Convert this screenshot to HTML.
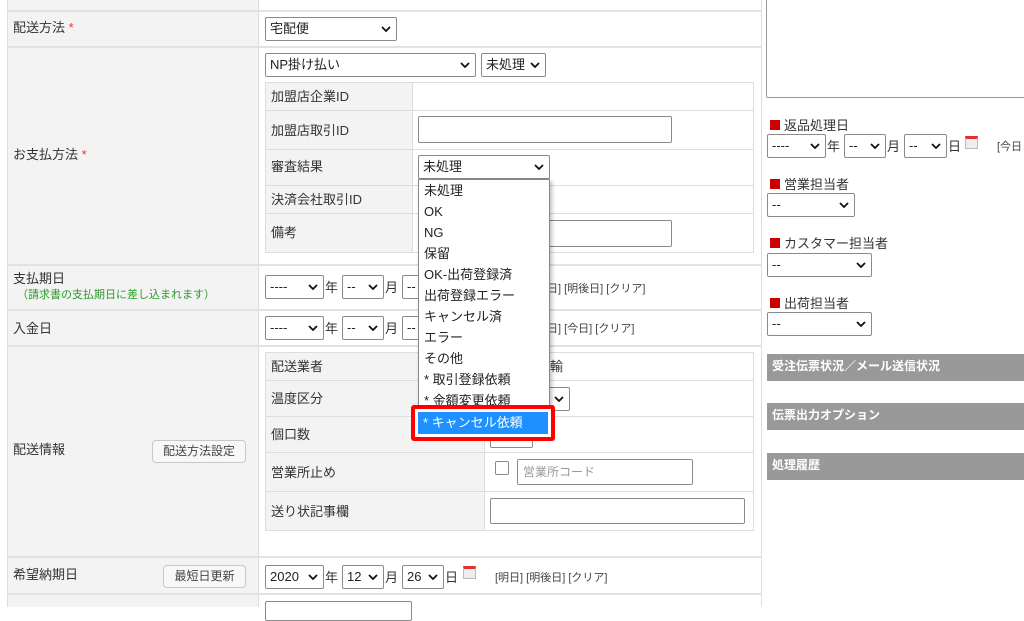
<!DOCTYPE html>
<html><head><meta charset="utf-8"><style>
*{box-sizing:border-box;margin:0;padding:0}
body{width:1024px;height:607px;overflow:hidden;background:#fff;font-family:"Liberation Sans","Noto Sans CJK JP",sans-serif;font-size:13px;color:#333;position:relative}
.a{position:absolute}
.lab{position:absolute;background:#f3f3f3}
.hl{position:absolute;height:2px;background:#e2e2e2}
.vl{position:absolute;width:1px;background:#ddd}
.sel{position:absolute;border:1px solid #8a8a8a;border-radius:2px;background:#fff;height:24px;line-height:22px;padding-left:4px;font-size:13px;color:#222;white-space:nowrap}
.sel svg{position:absolute;right:5px;top:8px}
.inp{position:absolute;border:1px solid #8a8a8a;border-radius:2px;background:#fff}
.t{position:absolute;white-space:nowrap;margin-top:-2px}
.s{position:absolute;font-size:11px;color:#444;white-space:nowrap}
.btn{position:absolute;border:1px solid #c8c8c8;border-radius:4px;background:#f8f8f8;font-size:12px;color:#444;text-align:center;line-height:20px}
.star{color:#e33}
.bar{position:absolute;left:767px;width:257px;height:27px;background:#999;color:#fff;font-weight:bold;font-size:12px;line-height:25px;padding-left:5px}
.sq{display:inline-block;width:10px;height:10px;background:#c00;margin-right:4px}
.cal{position:absolute;width:13px;height:13px;border:1px solid #bbb;border-top:3px solid #d33;background:#eee}
.dd div{height:21px;line-height:21px;padding-left:5px}
</style></head><body>
<svg width="0" height="0" style="position:absolute"><defs><symbol id="ch" viewBox="0 0 10 6"><path d="M1 1L5 5L9 1" stroke="#111" stroke-width="1.8" fill="none"/></symbol></defs></svg>

<div class="lab" style="left:7px;top:0;width:251px;height:607px"></div>
<div class="vl" style="left:7px;top:0;height:607px;background:#ddd"></div>
<div class="vl" style="left:258px;top:0;height:607px;background:#ddd"></div>
<div class="vl" style="left:761px;top:0;height:607px;background:#ddd"></div>
<div class="hl" style="left:7px;top:10px;width:755px"></div>
<div class="hl" style="left:7px;top:46px;width:755px"></div>
<div class="hl" style="left:7px;top:264px;width:755px"></div>
<div class="hl" style="left:7px;top:309px;width:755px"></div>
<div class="hl" style="left:7px;top:345px;width:755px"></div>
<div class="hl" style="left:7px;top:556px;width:755px"></div>
<div class="hl" style="left:7px;top:593px;width:755px"></div>

<div class="t" style="left:13px;top:19px">配送方法 <span class="star">*</span></div>
<div class="sel" style="left:265px;top:17px;width:132px">宅配便<svg width="10" height="6"><use href="#ch"/></svg></div>

<div class="t" style="left:13px;top:146px">お支払方法 <span class="star">*</span></div>
<div class="sel" style="left:265px;top:53px;width:211px">NP掛け払い<svg width="10" height="6"><use href="#ch"/></svg></div>
<div class="sel" style="left:481px;top:53px;width:65px">未処理<svg width="10" height="6"><use href="#ch"/></svg></div>
<div class="a" style="left:265px;top:82px;width:489px;height:171px;border:1px solid #ddd;background:#fff"></div>
<div class="lab" style="left:266px;top:83px;width:146px;height:169px"></div>
<div class="vl" style="left:412px;top:82px;height:171px"></div>
<div class="a" style="left:266px;top:110px;width:488px;height:1px;background:#ddd"></div>
<div class="a" style="left:266px;top:149px;width:488px;height:1px;background:#ddd"></div>
<div class="a" style="left:266px;top:185px;width:488px;height:1px;background:#ddd"></div>
<div class="a" style="left:266px;top:213px;width:488px;height:1px;background:#ddd"></div>
<div class="t" style="left:271px;top:88px">加盟店企業ID</div>
<div class="t" style="left:271px;top:122px">加盟店取引ID</div>
<div class="t" style="left:271px;top:158px">審査結果</div>
<div class="t" style="left:271px;top:191px">決済会社取引ID</div>
<div class="t" style="left:271px;top:224px">備考</div>
<div class="inp" style="left:418px;top:116px;width:254px;height:27px"></div>
<div class="inp" style="left:418px;top:220px;width:254px;height:27px"></div>
<div class="sel" style="left:418px;top:155px;width:132px">未処理<svg width="10" height="6"><use href="#ch"/></svg></div>

<div class="t" style="left:13px;top:270px">支払期日</div>
<div class="t" style="left:17px;top:288px;font-size:11px;color:#2a9a2a">（請求書の支払期日に差し込まれます）</div>
<div class="sel" style="left:265px;top:275px;width:59px">----<svg width="10" height="6"><use href="#ch"/></svg></div>
<div class="t" style="left:325px;top:279px">年</div>
<div class="sel" style="left:342px;top:275px;width:42px">--<svg width="10" height="6"><use href="#ch"/></svg></div>
<div class="t" style="left:385px;top:279px">月</div>
<div class="sel" style="left:402px;top:275px;width:40px">--</div>
<div class="s" style="left:547px;top:280px">日] [明後日] [クリア]</div>

<div class="t" style="left:13px;top:320px">入金日</div>
<div class="sel" style="left:265px;top:316px;width:59px">----<svg width="10" height="6"><use href="#ch"/></svg></div>
<div class="t" style="left:325px;top:320px">年</div>
<div class="sel" style="left:342px;top:316px;width:42px">--<svg width="10" height="6"><use href="#ch"/></svg></div>
<div class="t" style="left:385px;top:320px">月</div>
<div class="sel" style="left:402px;top:316px;width:40px">--</div>
<div class="s" style="left:547px;top:320px">日] [今日] [クリア]</div>

<div class="t" style="left:13px;top:441px">配送情報</div>
<div class="btn" style="left:152px;top:440px;width:94px;height:23px">配送方法設定</div>
<div class="a" style="left:265px;top:352px;width:489px;height:179px;border:1px solid #ddd;background:#fff"></div>
<div class="lab" style="left:266px;top:353px;width:218px;height:177px"></div>
<div class="vl" style="left:484px;top:352px;height:179px"></div>
<div class="a" style="left:266px;top:380px;width:488px;height:1px;background:#ddd"></div>
<div class="a" style="left:266px;top:416px;width:488px;height:1px;background:#ddd"></div>
<div class="a" style="left:266px;top:452px;width:488px;height:1px;background:#ddd"></div>
<div class="a" style="left:266px;top:491px;width:488px;height:1px;background:#ddd"></div>
<div class="t" style="left:271px;top:358px">配送業者</div>
<div class="t" style="left:271px;top:390px">温度区分</div>
<div class="t" style="left:271px;top:426px">個口数</div>
<div class="t" style="left:271px;top:464px">営業所止め</div>
<div class="t" style="left:271px;top:503px">送り状記事欄</div>
<div class="t" style="left:550px;top:358px">輸</div>
<div class="sel" style="left:490px;top:387px;width:80px"><svg width="10" height="6"><use href="#ch"/></svg></div>
<div class="sel" style="left:490px;top:424px;width:43px"></div>
<div class="a" style="left:495px;top:461px;width:14px;height:14px;border:1px solid #888;border-radius:2px;background:#fff"></div>
<div class="inp" style="left:517px;top:459px;width:176px;height:26px;font-size:12px;color:#999;line-height:24px;padding-left:5px">営業所コード</div>
<div class="inp" style="left:490px;top:498px;width:255px;height:26px"></div>

<div class="t" style="left:13px;top:566px">希望納期日</div>
<div class="btn" style="left:163px;top:565px;width:83px;height:23px">最短日更新</div>
<div class="sel" style="left:265px;top:565px;width:59px">2020<svg width="10" height="6"><use href="#ch"/></svg></div>
<div class="t" style="left:325px;top:569px">年</div>
<div class="sel" style="left:342px;top:565px;width:42px">12<svg width="10" height="6"><use href="#ch"/></svg></div>
<div class="t" style="left:385px;top:569px">月</div>
<div class="sel" style="left:402px;top:565px;width:42px">26<svg width="10" height="6"><use href="#ch"/></svg></div>
<div class="t" style="left:445px;top:569px">日</div>
<div class="cal" style="left:463px;top:566px"></div>
<div class="s" style="left:495px;top:569px">[明日] [明後日] [クリア]</div>
<div class="inp" style="left:265px;top:601px;width:147px;height:20px"></div>

<div class="a" style="left:766px;top:-2px;width:270px;height:100px;border:1px solid #999;border-radius:2px"></div>
<div class="t" style="left:770px;top:117px"><span class="sq"></span>返品処理日</div>
<div class="sel" style="left:767px;top:134px;width:59px">----<svg width="10" height="6"><use href="#ch"/></svg></div>
<div class="t" style="left:827px;top:138px">年</div>
<div class="sel" style="left:844px;top:134px;width:42px">--<svg width="10" height="6"><use href="#ch"/></svg></div>
<div class="t" style="left:887px;top:138px">月</div>
<div class="sel" style="left:904px;top:134px;width:43px">--<svg width="10" height="6"><use href="#ch"/></svg></div>
<div class="t" style="left:948px;top:138px">日</div>
<div class="cal" style="left:965px;top:136px"></div>
<div class="s" style="left:997px;top:138px">[今日</div>
<div class="t" style="left:770px;top:176px"><span class="sq"></span>営業担当者</div>
<div class="sel" style="left:767px;top:193px;width:88px">--<svg width="10" height="6"><use href="#ch"/></svg></div>
<div class="t" style="left:770px;top:235px"><span class="sq"></span>カスタマー担当者</div>
<div class="sel" style="left:767px;top:253px;width:105px">--<svg width="10" height="6"><use href="#ch"/></svg></div>
<div class="t" style="left:770px;top:295px"><span class="sq"></span>出荷担当者</div>
<div class="sel" style="left:767px;top:312px;width:105px">--<svg width="10" height="6"><use href="#ch"/></svg></div>
<div class="bar" style="top:354px">受注伝票状況／メール送信状況</div>
<div class="bar" style="top:403px">伝票出力オプション</div>
<div class="bar" style="top:453px">処理履歴</div>

<div class="a dd" style="left:418px;top:179px;width:132px;height:257px;background:#fff;border:1px solid #888;box-shadow:2px 2px 4px rgba(0,0,0,.25);color:#222;overflow:hidden;font-size:13px">
<div>未処理</div><div>OK</div><div>NG</div><div>保留</div><div>OK-出荷登録済</div><div>出荷登録エラー</div><div>キャンセル済</div><div>エラー</div><div>その他</div><div>* 取引登録依頼</div><div>* 金額変更依頼</div>
</div>
<div class="a" style="left:411px;top:405px;width:144px;height:36px;border:4px solid #f00;border-radius:3px;background:#fff"></div>
<div class="a" style="left:418px;top:412px;width:130px;height:22px;background:#1e90ff;color:#fff;line-height:22px;padding-left:5px">* キャンセル依頼</div>
</body></html>
